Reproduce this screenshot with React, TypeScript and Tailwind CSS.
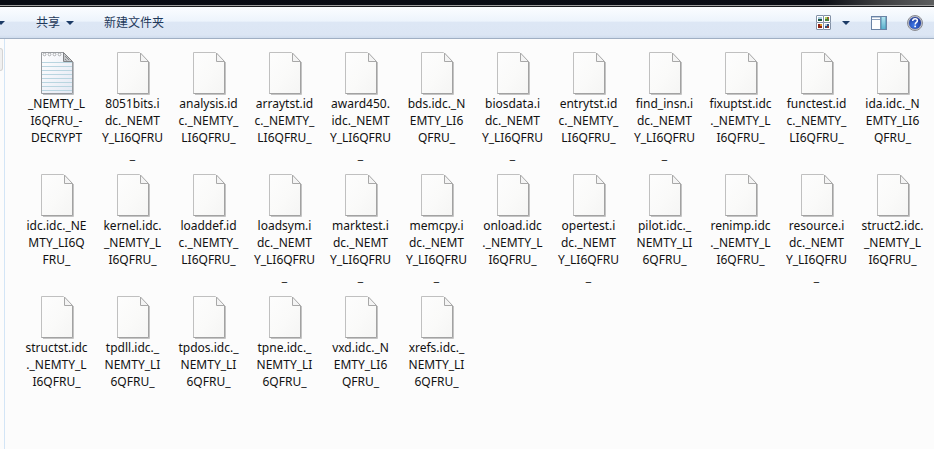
import React from "react";

type FileEntry = { lines: string[]; text?: boolean };

const files: FileEntry[] = [
  { lines: ["_NEMTY_L", "I6QFRU_-", "DECRYPT"], text: true },
  { lines: ["8051bits.i", "dc._NEMT", "Y_LI6QFRU", "_"] },
  { lines: ["analysis.id", "c._NEMTY_", "LI6QFRU_"] },
  { lines: ["arraytst.id", "c._NEMTY_", "LI6QFRU_"] },
  { lines: ["award450.", "idc._NEMT", "Y_LI6QFRU", "_"] },
  { lines: ["bds.idc._N", "EMTY_LI6", "QFRU_"] },
  { lines: ["biosdata.i", "dc._NEMT", "Y_LI6QFRU", "_"] },
  { lines: ["entrytst.id", "c._NEMTY_", "LI6QFRU_"] },
  { lines: ["find_insn.i", "dc._NEMT", "Y_LI6QFRU", "_"] },
  { lines: ["fixuptst.idc", "._NEMTY_L", "I6QFRU_"] },
  { lines: ["functest.id", "c._NEMTY_", "LI6QFRU_"] },
  { lines: ["ida.idc._N", "EMTY_LI6", "QFRU_"] },
  { lines: ["idc.idc._NE", "MTY_LI6Q", "FRU_"] },
  { lines: ["kernel.idc.", "_NEMTY_L", "I6QFRU_"] },
  { lines: ["loaddef.id", "c._NEMTY_", "LI6QFRU_"] },
  { lines: ["loadsym.i", "dc._NEMT", "Y_LI6QFRU", "_"] },
  { lines: ["marktest.i", "dc._NEMT", "Y_LI6QFRU", "_"] },
  { lines: ["memcpy.i", "dc._NEMT", "Y_LI6QFRU", "_"] },
  { lines: ["onload.idc", "._NEMTY_L", "I6QFRU_"] },
  { lines: ["opertest.i", "dc._NEMT", "Y_LI6QFRU", "_"] },
  { lines: ["pilot.idc._", "NEMTY_LI", "6QFRU_"] },
  { lines: ["renimp.idc", "._NEMTY_L", "I6QFRU_"] },
  { lines: ["resource.i", "dc._NEMT", "Y_LI6QFRU", "_"] },
  { lines: ["struct2.idc.", "_NEMTY_L", "I6QFRU_"] },
  { lines: ["structst.idc", "._NEMTY_L", "I6QFRU_"] },
  { lines: ["tpdll.idc._", "NEMTY_LI", "6QFRU_"] },
  { lines: ["tpdos.idc._", "NEMTY_LI", "6QFRU_"] },
  { lines: ["tpne.idc._", "NEMTY_LI", "6QFRU_"] },
  { lines: ["vxd.idc._N", "EMTY_LI6", "QFRU_"] },
  { lines: ["xrefs.idc._", "NEMTY_LI", "6QFRU_"] },
];

function PageIcon() {
  return (
    <svg width="34" height="44" viewBox="0 0 34 44" className="block">
      <path d="M2 42.5H32.5V10" fill="none" stroke="#c4c4c4" strokeWidth="1" />
      <path d="M.5 .5H22.5L31.5 9.5V41.5H.5Z" fill="url(#paper)" stroke="#c0c0c0" />
      <path d="M31.5 9.5V41.5H.5" fill="none" stroke="#a2a2a2" />
      <path d="M23.5 1V9.500H31.500Z" fill="#f4f4f4" stroke="#a8a8a8" />
    </svg>
  );
}

function NoteIcon() {
  return (
    <svg width="34" height="44" viewBox="0 0 34 44" className="block">
      <path d="M2 42.5H32.5V10" fill="none" stroke="#bcbfc3" />
      <path d="M.5 .5H22.5L31.5 9.5V41.5H.5Z" fill="url(#note)" stroke="#989b9f" />
      {[10.5, 14.5, 18.5, 22.5, 26.5, 30.5, 34.5, 38.5].map((y) => (
        <path key={y} d={`M1 ${y}H31`} stroke="#b9d5e0" />
      ))}
      <path d="M22.5 .5V9.5H31.5Z" fill="#c4c7ca" stroke="#808285" />
      <path d="M24 4l4 4M24 7l1.5 1.5" stroke="#77797c" strokeWidth=".8" />
      {[3.5, 8.5, 13.5, 18.5].map((x) => (
        <circle key={x} cx={x} cy="2.4" r="1.4" fill="#fff" stroke="#a2a5a9" strokeWidth=".9" />
      ))}
    </svg>
  );
}

function Caret() {
  return (
    <svg width="8" height="4" viewBox="0 0 8 4" className="block shrink-0">
      <path d="M0 0H8L4 4Z" fill="#1c3b66" />
    </svg>
  );
}

function ViewIcon() {
  return (
    <svg width="15" height="15" viewBox="0 0 15 15" className="block shrink-0">
      <g fill="#fff" stroke="#8391a6">
        <rect x=".5" y=".5" width="7" height="7" rx=".5" />
        <rect x="7.5" y=".5" width="7" height="7" rx=".5" />
        <rect x=".5" y="7.5" width="7" height="7" rx=".5" />
        <rect x="7.5" y="7.5" width="7" height="7" rx=".5" />
      </g>
      <path d="M2 2h4v2H2z" fill="#a9cbdc" />
      <path d="M2 4h4v2H2z" fill="#1c553f" />
      <path d="M9 2h4v4H9z" fill="#47813a" />
      <path d="M9 2h2v2H9z" fill="#b6cb5c" />
      <path d="M12 2h1v2h-1z" fill="#b4512c" />
      <path d="M2 9h4v4H2z" fill="#8c2112" />
      <path d="M4 9h2v2H4z" fill="#d99324" />
      <path d="M9 9h4v4H9z" fill="#294e79" />
      <path d="M9 9h2v2H9z" fill="#a9c6dd" />
      <path d="M11 11h2v2h-2z" fill="#8a3427" />
    </svg>
  );
}

function PaneIcon() {
  return (
    <svg width="16" height="14" viewBox="0 0 16 14" className="block shrink-0">
      <rect x=".5" y=".5" width="15" height="13" fill="#fff" stroke="#6a83a5" />
      <path d="M1 1.5H15" stroke="#c0cddd" />
      <path d="M1 3.5H10" stroke="#8ba0bc" />
      <path d="M9.5 1V13" stroke="#7590b0" />
      <rect x="10" y="1" width="5" height="12" fill="url(#pane)" />
      <path d="M10.5 1V13M14.5 1V13" stroke="#4d91af" strokeOpacity=".55" />
    </svg>
  );
}

function HelpIcon() {
  return (
    <svg width="16" height="16" viewBox="0 0 16 16" className="block shrink-0">
      <circle cx="8" cy="8" r="7.5" fill="#d3d5da" stroke="#898b91" />
      <circle cx="8" cy="8" r="6.1" fill="url(#help)" stroke="#4a5c92" strokeWidth=".5" />
      <path
        d="M5.7 6.1C5.7 4.6 6.7 3.8 8.1 3.8c1.4 0 2.300.8 2.300 1.900 0 1.700-2.200 1.700-2.200 3.700"
        fill="none"
        stroke="#fff"
        strokeWidth="1.5"
      />
      <rect x="7.3" y="10.6" width="1.7" height="1.6" fill="#fff" />
    </svg>
  );
}

function Gradients() {
  return (
    <svg width="0" height="0" className="absolute">
      <defs>
        <linearGradient id="paper" x1="0" y1="0" x2="1" y2="1">
          <stop offset="0" stopColor="#fdfdfd" />
          <stop offset=".55" stopColor="#fafaf9" />
          <stop offset="1" stopColor="#f5f5f4" />
        </linearGradient>
        <linearGradient id="note" x1="0" y1="0" x2="1" y2="1">
          <stop offset="0" stopColor="#ffffff" />
          <stop offset="1" stopColor="#e3e8f3" />
        </linearGradient>
        <linearGradient id="pane" x1="0" y1="0" x2="0" y2="1">
          <stop offset="0" stopColor="#b5e4f0" />
          <stop offset="1" stopColor="#58b0cd" />
        </linearGradient>
        <radialGradient id="help" cx=".4" cy=".7" r=".7">
          <stop offset="0" stopColor="#3b77e8" />
          <stop offset="1" stopColor="#1d3796" />
        </radialGradient>
      </defs>
    </svg>
  );
}

export default function App() {
  return (
    <div className="flex h-[449px] w-[934px] flex-col overflow-hidden bg-[#fcfcfc] font-['Noto_Sans','Noto_Sans_CJK_SC',sans-serif] text-[12px]">
      <Gradients />
      <div className="h-[5px] shrink-0 bg-[linear-gradient(90deg,#080b13_0%,#0a0d14_88%,#3c3d3f_94%,#5d5f60_100%)]" />
      <div className="h-px shrink-0 bg-[#9c9c9c]" />
      <div className="h-px shrink-0 bg-[#17191c]" />
      <header className="flex h-[32px] shrink-0 items-center border-b border-[#a0afc3] bg-[linear-gradient(180deg,#fbfdff_0%,#edf4fc_45%,#dde7f5_50%,#dce6f4_90%,#cfdced_100%)] text-[#1e395b]">
        <div className="-ml-[3px] w-[39px]">
          <Caret />
        </div>
        <div className="flex w-[68px] items-center gap-[6px]">
          <span>共享</span>
          <Caret />
        </div>
        <span>新建文件夹</span>
        <div className="ml-auto flex items-center pr-[11px]">
          <ViewIcon />
          <div className="ml-[11px]">
            <Caret />
          </div>
          <div className="ml-[21px]">
            <PaneIcon />
          </div>
          <div className="ml-[20px]">
            <HelpIcon />
          </div>
        </div>
      </header>
      <div className="flex min-h-0 flex-1">
        <aside className="w-[5px] shrink-0 border-r border-[#d3e5f6] pt-[9px]">
          <div className="h-[23px] w-[3px] rounded-r-[3px] border border-l-0 border-[#d4d4d4] bg-[#f0f0f0]" />
        </aside>
        <main className="grid shrink-0 auto-rows-[122px] grid-cols-[repeat(12,76px)] pl-[14px] pt-[13px]">
          {files.map((file, i) => (
            <div key={i} className="flex flex-col items-center">
              <div className="ml-[2px] h-[43px]">{file.text ? <NoteIcon /> : <PageIcon />}</div>
              <div className="mr-[1px] flex flex-col items-center text-[12px] leading-[17px] text-[#111111]">
                {file.lines.map((line, n) => (
                  <span key={n} className="whitespace-nowrap">
                    {line}
                  </span>
                ))}
              </div>
            </div>
          ))}
        </main>
      </div>
    </div>
  );
}
